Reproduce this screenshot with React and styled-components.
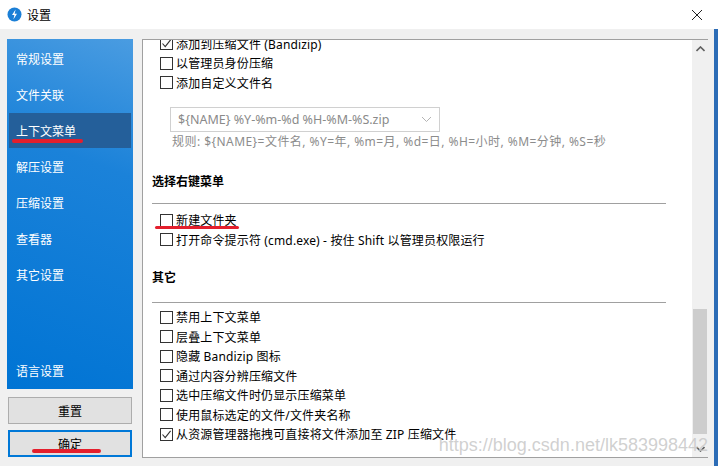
import React from "react";
import styled, { createGlobalStyle } from "styled-components";

const GlobalStyle = createGlobalStyle`
  html, body {
    margin: 0;
    padding: 0;
    background: #f0f0f0;
  }
  * {
    box-sizing: border-box;
  }
`;

const menuItems = ["常规设置", "文件关联", "上下文菜单", "解压设置", "压缩设置", "查看器", "其它设置"];

const otherOptions = [
  { label: "禁用上下文菜单" },
  { label: "层叠上下文菜单" },
  { label: "隐藏 Bandizip 图标" },
  { label: "通过内容分辨压缩文件" },
  { label: "选中压缩文件时仍显示压缩菜单" },
  { label: "使用鼠标选定的文件/文件夹名称" },
  { label: "从资源管理器拖拽可直接将文件添加至 ZIP 压缩文件", checked: true },
];

function CheckBox({ checked }) {
  return (
    <Box>
      {checked ? (
        <svg width="11" height="11" viewBox="0 0 11 11">
          <path d="M1.5 5.5 L4.2 8.6 L9.6 1.8" fill="none" stroke="#333" strokeWidth="1.1" />
        </svg>
      ) : null}
    </Box>
  );
}

function Option({ label, checked, mark }) {
  return (
    <Row>
      <CheckBox checked={checked} />
      <span>{label}</span>
      {mark ? <Mark $left={-5} $top={15} $width={84} /> : null}
    </Row>
  );
}

function App() {
  return (
    <Window>
      <GlobalStyle />
      <TitleBar>
        <svg width="15" height="15" viewBox="0 0 15 15">
          <circle cx="7.5" cy="7.5" r="7" fill="#1b7fd6" />
          <path d="M8.6 2.6 L5 8 L7.4 8 L6.4 12.4 L10 6.8 L7.6 6.8 Z" fill="#fff" />
        </svg>
        <Title>设置</Title>
        <Close>
          <svg width="12" height="12" viewBox="0 0 12 12">
            <path d="M1 1 L11 11 M11 1 L1 11" stroke="#222" strokeWidth="1" />
          </svg>
        </Close>
      </TitleBar>

      <Body>
        <LeftColumn>
          <Sidebar>
            {menuItems.map((item) => (
              <MenuItem key={item} $active={item === "上下文菜单"}>
                {item}
                {item === "上下文菜单" ? <Mark $left={3} $top={26} $width={71} /> : null}
              </MenuItem>
            ))}
            <MenuItem $bottom>语言设置</MenuItem>
          </Sidebar>
          <Button>重置</Button>
          <Button $primary>
            确定
            <Mark $left={22} $top={17} $width={69} />
          </Button>
        </LeftColumn>

        <Panel>
          <Scroller>
            <Inner>
              <Group>
                <Option label="添加到压缩文件 (Bandizip)" checked />
                <Option label="以管理员身份压缩" />
                <Option label="添加自定义文件名" />
              </Group>
              <Select>
                <span>{"${NAME} %Y-%m-%d %H-%M-%S.zip"}</span>
                <svg width="11" height="7" viewBox="0 0 11 7">
                  <path d="M1 1 L5.5 5.5 L10 1" fill="none" stroke="#b4b4b4" strokeWidth="1" />
                </svg>
              </Select>
              <Hint>{"规则: ${NAME}=文件名, %Y=年, %m=月, %d=日, %H=小时, %M=分钟, %S=秒"}</Hint>

              <SectionTitle $gap={24}>选择右键菜单</SectionTitle>
              <Divider $gap={13} />
              <Group $gap={7}>
                <Option label="新建文件夹" mark />
                <Option label="打开命令提示符 (cmd.exe) - 按住 Shift 以管理员权限运行" />
              </Group>

              <SectionTitle $gap={20}>其它</SectionTitle>
              <Divider $gap={16} />
              <Group $gap={5}>
                {otherOptions.map((opt) => (
                  <Option key={opt.label} label={opt.label} checked={opt.checked} />
                ))}
              </Group>
            </Inner>
          </Scroller>
          <ScrollBar>
            <Arrow>
              <svg width="9" height="6" viewBox="0 0 9 6">
                <path d="M0.5 5 L4.5 1 L8.5 5" fill="none" stroke="#606060" strokeWidth="1.6" />
              </svg>
            </Arrow>
            <Track>
              <Thumb />
            </Track>
            <Arrow>
              <svg width="9" height="6" viewBox="0 0 9 6">
                <path d="M0.5 1 L4.5 5 L8.5 1" fill="none" stroke="#606060" strokeWidth="1.6" />
              </svg>
            </Arrow>
          </ScrollBar>
          <Watermark>https://blog.csdn.net/lk583998442</Watermark>
        </Panel>
        <Edge />
      </Body>
    </Window>
  );
}

const Window = styled.div`
  width: 718px;
  height: 466px;
  display: flex;
  flex-direction: column;
  background: #f0f0f0;
  font-family: "Noto Sans", "Noto Sans CJK SC", sans-serif;
  font-size: 12px;
  color: #000;
  overflow: hidden;
`;

const TitleBar = styled.div`
  height: 29px;
  background: #fff;
  display: flex;
  align-items: center;
  padding-left: 7px;
  gap: 5px;
  flex-shrink: 0;
`;

const Title = styled.span`
  font-size: 12px;
  flex: 1;
`;

const Close = styled.div`
  width: 36px;
  display: flex;
  justify-content: center;
  padding-right: 6px;
`;

const Body = styled.div`
  flex: 1;
  display: flex;
  padding: 10px 0 8px 7px;
  position: relative;
`;

const LeftColumn = styled.div`
  width: 126px;
  display: flex;
  flex-direction: column;
  align-items: stretch;
  margin-right: 9px;
`;

const Sidebar = styled.div`
  height: 350px;
  display: flex;
  flex-direction: column;
  padding: 2px 2px 0 2px;
  background: linear-gradient(200deg, #4a9ce1 0%, #1b82d9 35%, #0074d4 100%);
  margin-bottom: 8px;
`;

const MenuItem = styled.div`
  position: relative;
  height: ${(p) => (p.$active ? "35px" : "36px")};
  margin-bottom: ${(p) => (p.$active ? "1px" : "0")};
  display: flex;
  align-items: center;
  padding-left: 7px;
  color: #fff;
  font-size: 12px;
  background: ${(p) => (p.$active ? "#245f9a" : "transparent")};
  margin-top: ${(p) => (p.$bottom ? "auto" : "0")};
`;

const Mark = styled.span`
  position: absolute;
  left: ${(p) => p.$left}px;
  top: ${(p) => p.$top}px;
  width: ${(p) => p.$width}px;
  height: 3.5px;
  border-radius: 2px;
  background: #e41f2d;
`;

const Button = styled.div`
  position: relative;
  height: 27px;
  margin: 0 1px 6px 1px;
  display: flex;
  align-items: center;
  justify-content: center;
  background: #e1e1e1;
  border: ${(p) => (p.$primary ? "2px solid #0078d7" : "1px solid #adadad")};
  font-size: 12px;
`;

const Panel = styled.div`
  position: relative;
  width: 566px;
  height: 419px;
  border: 1px solid #a0a0a0;
  border-right: none;
  background: #fff;
  display: flex;
`;

const Scroller = styled.div`
  flex: 1;
  overflow: hidden;
`;

const Inner = styled.div`
  margin-top: -6px;
  padding-left: 9px;
  padding-right: 25px;
`;

const Group = styled.div`
  margin-top: ${(p) => p.$gap || 0}px;
  padding-left: 8px;
`;

const Row = styled.div`
  position: relative;
  height: 19.5px;
  display: flex;
  align-items: center;
  gap: 3px;
  white-space: nowrap;
  letter-spacing: 0.15px;
`;

const Box = styled.span`
  width: 13px;
  height: 13px;
  border: 1px solid #333;
  background: #fff;
  display: flex;
  align-items: center;
  justify-content: center;
  flex-shrink: 0;
`;

const Select = styled.div`
  margin: 14px 0 0 18px;
  width: 270px;
  height: 25px;
  border: 1px solid #d0d0d0;
  display: flex;
  align-items: center;
  justify-content: space-between;
  padding: 0 7px 0 7px;
  color: #8a8a8a;
  font-size: 12.5px;
`;

const Hint = styled.div`
  margin: 2px 0 0 20px;
  height: 16px;
  line-height: 16px;
  color: #8c8c8c;
  font-size: 12px;
  letter-spacing: 0.45px;
  white-space: nowrap;
`;

const SectionTitle = styled.div`
  margin-top: ${(p) => p.$gap}px;
  height: 16px;
  line-height: 16px;
  font-weight: bold;
  font-size: 12px;
`;

const Divider = styled.div`
  margin-top: ${(p) => p.$gap}px;
  width: 514px;
  height: 1px;
  background: #a0a0a0;
`;

const ScrollBar = styled.div`
  width: 16px;
  display: flex;
  flex-direction: column;
  background: #f0f0f0;
`;

const Arrow = styled.div`
  height: 17px;
  display: flex;
  align-items: center;
  justify-content: center;
`;

const Track = styled.div`
  flex: 1;
  display: flex;
  flex-direction: column;
  justify-content: flex-end;
  padding: 0 1px 6px 1px;
`;

const Thumb = styled.div`
  height: 125px;
  background: #cdcdcd;
`;

const Watermark = styled.div`
  position: absolute;
  right: 0;
  bottom: 1px;
  font-family: "Liberation Sans", Arial, sans-serif;
  font-size: 18px;
  color: rgba(200, 200, 200, 0.85);
  white-space: nowrap;
  pointer-events: none;
`;

const Edge = styled.div`
  position: absolute;
  right: 0;
  top: 0;
  bottom: 0;
  width: 4px;
  background: #2c6cb6;
`;

export default App;
